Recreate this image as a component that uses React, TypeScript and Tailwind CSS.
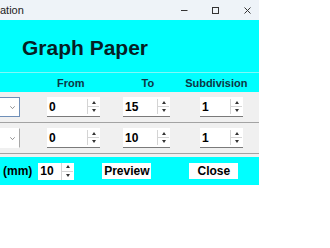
import React from "react"

interface RowData {
  id: number
  from: string
  to: string
  sub: string
  focused: boolean
}

const rows: RowData[] = [
  { id: 1, from: "0", to: "15", sub: "1", focused: true },
  { id: 2, from: "0", to: "10", sub: "1", focused: false },
]

// petit bouton haut/bas à droite de la zone de saisie
function Spinner() {
  return (
    <div className="flex flex-col w-[12px] h-full border-l border-[#d4d4d4]">
      <div className="flex-1 flex items-center justify-center border-b border-[#d4d4d4]">
        <svg width="4" height="3" viewBox="0 0 4 3">
          <path d="M2 0 L4 3 L0 3 Z" fill="#333" />
        </svg>
      </div>
      <div className="flex-1 flex items-center justify-center">
        <svg width="4" height="3" viewBox="0 0 4 3">
          <path d="M0 0 L4 0 L2 3 Z" fill="#333" />
        </svg>
      </div>
    </div>
  )
}

function NumInput({ value, width }: { value: string; width: string }) {
  return (
    <div className={`flex items-stretch h-[20px] bg-white border-b border-[#7a7a7a] ${width}`}>
      <div className="flex-1 flex items-center pl-[2px] text-[12px] font-bold text-black">{value}</div>
      <div className="py-[2px] pr-[1px] h-full flex">
        <Spinner />
      </div>
    </div>
  )
}

export default function App() {
  return (
    <div
      className="w-[330px] h-[248px] bg-white overflow-hidden"
      style={{ fontFamily: '"Liberation Sans", Arial, sans-serif' }}
    >
      <div className="w-[259px]">
        {/* barre de titre */}
        <div className="h-[20px] bg-[#eef3f8] flex items-center text-[11px] text-[#222]">
          <span className="ml-0">ation</span>
          <div className="flex-1" />
          <svg width="7" height="7" viewBox="0 0 7 7">
            <path d="M0 3.5 H6.5" stroke="#333" strokeWidth="1" />
          </svg>
          <svg className="ml-[24px]" width="7" height="7" viewBox="0 0 7 7">
            <rect x="0.5" y="0.5" width="6" height="6" fill="none" stroke="#333" strokeWidth="1" />
          </svg>
          <svg className="ml-[25px] mr-[8px]" width="7" height="7" viewBox="0 0 7 7">
            <path d="M0.5 0.5 L6.5 6.5 M6.5 0.5 L0.5 6.5" stroke="#333" strokeWidth="1" />
          </svg>
        </div>

        {/* en-tête */}
        <div className="bg-[#00ffff]">
          <div className="h-[52px] flex items-center pl-[22px] pt-[2px]">
            <h1 className="text-[21px] font-bold text-[#061e24] leading-none">Graph Paper</h1>
          </div>
          <div className="h-[20px] border-t border-[#7ff8f8] flex items-center pt-[2px] text-[11px] font-bold text-[#0d3644]">
            <span className="ml-[57px]">From</span>
            <span className="ml-[57px]">To</span>
            <span className="ml-[31px]">Subdivision</span>
          </div>
        </div>

        {/* lignes */}
        <div className="bg-[#f0f0f0]">
          {rows.map((r) => (
            <div
              key={r.id}
              className="h-[31px] flex items-center border-b border-[#a3a3a3]"
            >
              <div
                className={`w-[20px] h-[20px] bg-white border-r flex items-center justify-end pr-[4px] ${
                  r.focused ? "border-[#6f8fb8] border-y" : "border-[#a8a8a8] border-y border-y-transparent"
                }`}
              >
                <svg width="5" height="3" viewBox="0 0 5 3">
                  <path d="M0.3 0.3 L2.5 2.6 L4.7 0.3" fill="none" stroke="#777" strokeWidth="0.8" />
                </svg>
              </div>
              <div className="ml-[27px]">
                <NumInput value={r.from} width="w-[53px]" />
              </div>
              <div className="ml-[23px]">
                <NumInput value={r.to} width="w-[47px]" />
              </div>
              <div className="ml-[30px]">
                <NumInput value={r.sub} width="w-[43px]" />
              </div>
            </div>
          ))}
          <div className="h-[3px]" />
        </div>

        {/* pied */}
        <div className="h-[28px] bg-[#00ffff] flex items-center text-[12px] font-bold text-black">
          <span className="ml-[3px]">(mm)</span>
          <div className="ml-[6px] w-[36px] h-[17px] bg-white flex items-stretch">
            <div className="flex-1 flex items-center pl-[2px] text-[12px]">10</div>
            <div className="pr-[1px] flex">
              <Spinner />
            </div>
          </div>
          <button className="ml-[28px] w-[49px] h-[16px] bg-white text-[12px] font-bold flex items-center justify-center">
            Preview
          </button>
          <button className="ml-[38px] w-[49px] h-[16px] bg-white text-[12px] font-bold flex items-center justify-center">
            Close
          </button>
        </div>
      </div>
    </div>
  )
}
